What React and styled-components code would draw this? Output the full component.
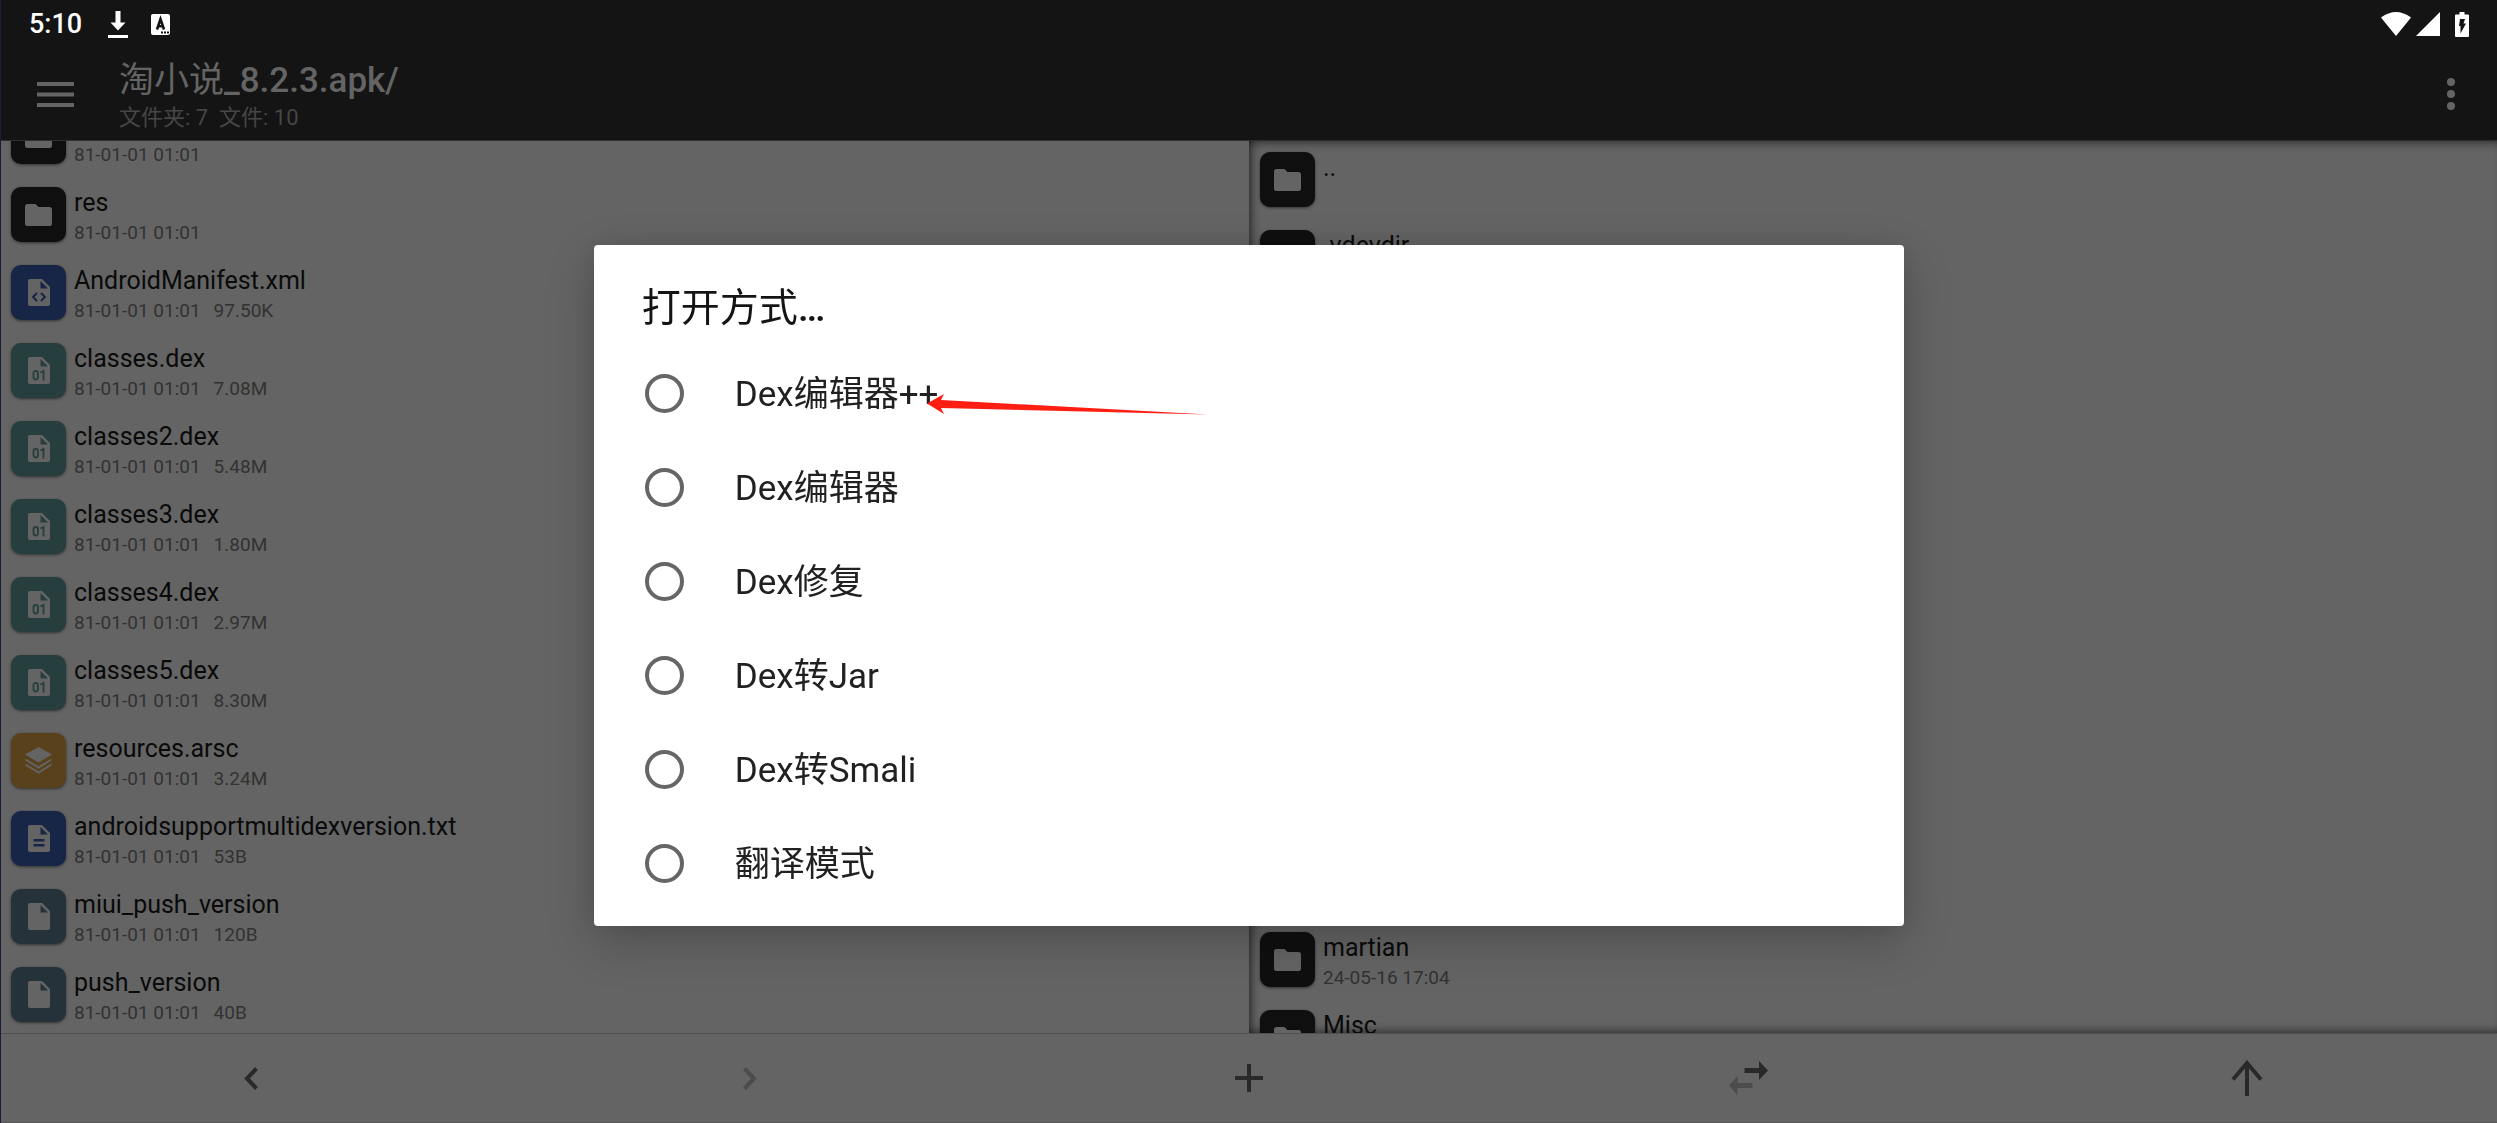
import React from "react";
import styled, { createGlobalStyle } from "styled-components";

const Global = createGlobalStyle`
  * { box-sizing: border-box; }
  html, body, #root { height: 100%; margin: 0; }
  body { background: #646464; overflow: hidden; font-family: Roboto, "Noto Sans CJK SC", sans-serif; }
  button { background: none; border: 0; padding: 0; margin: 0; font: inherit; color: inherit; }
`;

const Screen = styled.div`
  height: 100vh;
  display: flex;
  flex-direction: column;
  border-left: 1px solid #1f1c38;
`;

const StatusBar = styled.div`
  flex: none;
  height: 48px;
  padding: 0 28px;
  display: flex;
  align-items: center;
  justify-content: space-between;
  background: #141414;
  color: #fff;
`;

const StatusGroup = styled.div`
  display: flex;
  align-items: center;
`;

const Clock = styled.span`
  font-size: 27px;
  line-height: 48px;
  font-weight: 500;
  margin-right: 26px;
`;

const Glyph = styled.svg`
  display: block;
  flex: none;
  width: ${(p) => p.$w}px;
  height: ${(p) => p.$h}px;
  margin-left: ${(p) => p.$gap || 0}px;
`;

const AppBar = styled.header`
  flex: none;
  height: 93px;
  padding: 0 40px 0 36px;
  display: flex;
  align-items: center;
  background: #141414;
  border-bottom: 1px solid #303030;
  color: #646464;
`;

const Titles = styled.div`
  flex: 1;
  margin-left: 45px;
  padding-top: 4px;
`;

const AppTitle = styled.h1`
  margin: 0;
  font-size: 35px;
  line-height: 44px;
  font-weight: 500;
`;

const Han = styled.span`
  font-weight: 400;
`;

const AppSubtitle = styled.p`
  margin: 0;
  font-size: 22px;
  line-height: 30px;
  color: #464646;
  white-space: pre;
`;

const Panes = styled.main`
  flex: 1;
  min-height: 0;
  display: grid;
  grid-template-columns: 1fr 1fr;
`;

const Pane = styled.ul`
  list-style: none;
  margin: 0;
  min-width: 0;
  overflow: hidden;
  display: flex;
  flex-direction: column;
  gap: 23px;
  justify-content: ${(p) => (p.$scrolled ? "flex-end" : "flex-start")};
  padding: ${(p) => (p.$scrolled ? "0 10px 11px" : "11px 11px 0")};
  box-shadow: ${(p) =>
    p.$sunken
      ? "inset 10px 0 10px -8px rgba(0,0,0,.6), inset 0 10px 10px -8px rgba(0,0,0,.5), inset 0 -10px 10px -8px rgba(0,0,0,.5)"
      : "none"};
`;

const Entry = styled.li`
  flex: none;
  height: 55px;
  display: flex;
  gap: 8px;
`;

const Badge = styled.span`
  flex: none;
  width: 55px;
  height: 55px;
  border-radius: 10px;
  display: flex;
  align-items: center;
  justify-content: center;
  background: ${(p) => p.$color};
  box-shadow: 0 1px 3px rgba(0, 0, 0, 0.5);
`;

const Name = styled.span`
  display: block;
  font-size: 25px;
  line-height: 32px;
  height: 32px;
  color: #0a0a0a;
`;

const Meta = styled.span`
  display: flex;
  gap: 13px;
  font-size: 19px;
  line-height: 28px;
  color: #323232;
`;

const NavBar = styled.nav`
  flex: none;
  height: 90px;
  display: grid;
  grid-template-columns: repeat(5, 1fr);
  border-top: 1px solid #505050;
  border-bottom: 1px solid #565656;
`;

const NavButton = styled.button`
  display: flex;
  align-items: center;
  justify-content: center;
`;

const Overlay = styled.div`
  position: fixed;
  inset: 48px 0 0 1px;
  display: flex;
  align-items: center;
  justify-content: center;
`;

const Dialog = styled.form`
  width: 52.5%;
  padding: 38px 48px 16px;
  background: #fff;
  border-radius: 4px;
  box-shadow: 0 16px 50px rgba(0, 0, 0, 0.2), 0 0 24px rgba(0, 0, 0, 0.1);
`;

const DialogTitle = styled.h2`
  margin: 0 0 13px;
  font-size: 39px;
  line-height: 50px;
  font-weight: 500;
  color: #141414;
`;

const Option = styled.label`
  height: 94px;
  display: flex;
  align-items: center;
  gap: 51px;
  font-size: 35px;
  line-height: 48px;
  color: #212121;
`;

const Radio = styled.input`
  appearance: none;
  margin: 0 0 0 3px;
  width: 39px;
  height: 39px;
  border: 4px solid #666;
  border-radius: 50%;
`;

const OptionText = styled.span`
  position: relative;
  padding-top: 3px;
`;

const Pointer = styled.svg`
  position: absolute;
  left: 192px;
  top: 26px;
  width: 281px;
  height: 21px;
`;

const GREY = "#646464";
const kinds = {
  folder: { color: "#0f0f0f" },
  xml: { color: "#172647" },
  dex: { color: "#263e3d" },
  arsc: { color: "#59421b" },
  txt: { color: "#172647" },
  file: { color: "#26323a" },
};

function KindIcon({ kind }) {
  const color = kinds[kind].color;
  if (kind === "folder")
    return (
      <Glyph $w={27} $h={22} viewBox="0 0 27 22" aria-hidden="true">
        <path fill={GREY} d="M2.5 0H10.5L13.5 3H24.5A2.5 2.5 0 0 1 27 5.500V19.500A2.500 2.500 0 0 1 24.500 22H2.500A2.500 2.500 0 0 1 0 19.500V2.500A2.500 2.500 0 0 1 2.500 0Z" />
      </Glyph>
    );
  if (kind === "arsc")
    return (
      <Glyph $w={27} $h={27} viewBox="0 0 27 27" aria-hidden="true">
        <path fill={GREY} d="M13.500 0L27 7.500L13.500 15.500L0 7.500Z" />
        <path fill="none" stroke={GREY} strokeWidth="2" d="M.5 12.500L13.500 20.500L26.500 12.500M.5 17.500L13.500 25.500L26.500 17.500" />
      </Glyph>
    );
  return (
    <Glyph $w={22} $h={27} viewBox="0 0 22 27" aria-hidden="true">
      <path fill={GREY} d="M2 0H14L22 8V25A2 2 0 0 1 20 27H2A2 2 0 0 1 0 25V2A2 2 0 0 1 2 0Z" />
      <path fill={color} d="M12.500 2V9.500H20Z" />
      {kind === "xml" && <path fill="none" stroke={color} strokeWidth="2" d="M9 14L5 18L9 22M13 14L17 18L13 22" />}
      {kind === "txt" && <path fill={color} d="M5.500 14H16.500V16.500H5.500ZM5.500 19H16.500V21.500H5.500Z" />}
      {kind === "dex" && (
        <g fill="none" stroke={color} strokeWidth="1.800">
          <rect x="5.500" y="14" width="4.500" height="8.500" rx="2.200" />
          <path d="M12.500 15.500L15.500 14V23.400" />
        </g>
      )}
    </Glyph>
  );
}

const D = "81-01-01 01:01";
const left = [
  { kind: "folder", date: D },
  { kind: "folder", name: "res", date: D },
  { kind: "xml", name: "AndroidManifest.xml", date: D, size: "97.50K" },
  { kind: "dex", name: "classes.dex", date: D, size: "7.08M" },
  { kind: "dex", name: "classes2.dex", date: D, size: "5.48M" },
  { kind: "dex", name: "classes3.dex", date: D, size: "1.80M" },
  { kind: "dex", name: "classes4.dex", date: D, size: "2.97M" },
  { kind: "dex", name: "classes5.dex", date: D, size: "8.30M" },
  { kind: "arsc", name: "resources.arsc", date: D, size: "3.24M" },
  { kind: "txt", name: "androidsupportmultidexversion.txt", date: D, size: "53B" },
  { kind: "file", name: "miui_push_version", date: D, size: "120B" },
  { kind: "file", name: "push_version", date: D, size: "40B" },
];
const right = [
  { kind: "folder", name: ".." },
  { kind: "folder", name: ".vdevdir" },
  ...Array.from({ length: 8 }, () => ({ kind: "folder" })),
  { kind: "folder", name: "martian", date: "24-05-16 17:04" },
  { kind: "folder", name: "Misc" },
];
const options = ["Dex编辑器++", "Dex编辑器", "Dex修复", "Dex转Jar", "Dex转Smali", "翻译模式"];

function FileList({ items, ...rest }) {
  return (
    <Pane {...rest}>
      {items.map(({ kind, name, date, size }, i) => (
        <Entry key={i}>
          <Badge $color={kinds[kind].color}>
            <KindIcon kind={kind} />
          </Badge>
          <div>
            <Name>{name}</Name>
            {date && (
              <Meta>
                <span>{date}</span>
                {size && <span>{size}</span>}
              </Meta>
            )}
          </div>
        </Entry>
      ))}
    </Pane>
  );
}

export default function App() {
  return (
    <>
      <Global />
      <Screen>
        <StatusBar>
          <StatusGroup>
            <Clock>5:10</Clock>
            <Glyph $w={20} $h={27} viewBox="0 0 20 27" fill="#fff" aria-hidden="true">
              <path d="M7.500 0H12.500V11.500H17.500L10 19.500L2.500 11.500H7.500ZM0 24H20V27H0Z" />
            </Glyph>
            <Glyph $w={19} $h={21} $gap={23} viewBox="0 0 19 21" aria-hidden="true">
              <rect width="19" height="21" rx="2" fill="#fff" />
              <path fill="none" stroke="#141414" strokeWidth="2.600" d="M6 15.500L9.500 5L13 15.500M7 12.200H12" />
              <path fill="#141414" d="M10 17.500h2v2h-2zM13 17.500h2v2h-2zM16 17.500h2v2h-2z" />
            </Glyph>
          </StatusGroup>
          <StatusGroup>
            <Glyph $w={30} $h={24} viewBox="0 0 30 24" fill="#fff" aria-hidden="true">
              <path d="M0 5.500Q15 -5.500 30 5.500L15 24Z" />
            </Glyph>
            <Glyph $w={24} $h={24} $gap={5} viewBox="0 0 24 24" fill="#fff" aria-hidden="true">
              <path d="M24 0V24H0Z" />
            </Glyph>
            <Glyph $w={14} $h={25} $gap={15} viewBox="0 0 14 25" aria-hidden="true">
              <path fill="#fff" d="M4.500 0H9.500V2.500H13Q14 2.500 14 3.500V24Q14 25 13 25H1Q0 25 0 24V3.500Q0 2.500 1 2.500H4.500Z" />
              <path fill="#141414" d="M5 7H10L8.500 11.500H11L5.500 21.500V14H4Z" />
            </Glyph>
          </StatusGroup>
        </StatusBar>
        <AppBar>
          <button aria-label="菜单">
            <Glyph $w={37} $h={25} viewBox="0 0 37 25" fill={GREY}>
              <path d="M0 0H37V4H0ZM0 10.500H37V14.500H0ZM0 21H37V25H0Z" />
            </Glyph>
          </button>
          <Titles>
            <AppTitle>
              <Han>淘小说</Han>_8.2.3.apk/
            </AppTitle>
            <AppSubtitle>{"文件夹: 7  文件: 10"}</AppSubtitle>
          </Titles>
          <button aria-label="更多">
            <Glyph $w={12} $h={32} viewBox="0 0 12 32" fill={GREY}>
              <circle cx="6" cy="4" r="4" />
              <circle cx="6" cy="16" r="4" />
              <circle cx="6" cy="28" r="4" />
            </Glyph>
          </button>
        </AppBar>
        <Panes>
          <FileList items={left} $scrolled />
          <FileList items={right} $sunken />
        </Panes>
        <NavBar>
          <NavButton aria-label="后退">
            <Glyph $w={14} $h={23} viewBox="0 0 14 23" fill="none" stroke="#292929" strokeWidth="4">
              <path d="M12.500 1.500L3 11.500L12.500 21.500" />
            </Glyph>
          </NavButton>
          <NavButton aria-label="前进">
            <Glyph $w={14} $h={23} viewBox="0 0 14 23" fill="none" stroke="#4c4c4c" strokeWidth="4">
              <path d="M1.500 1.500L11 11.500L1.500 21.500" />
            </Glyph>
          </NavButton>
          <NavButton aria-label="新建">
            <Glyph $w={28} $h={28} viewBox="0 0 28 28" fill="#292929">
              <path d="M12 0H16V12H28V16H16V28H12V16H0V12H12Z" />
            </Glyph>
          </NavButton>
          <NavButton aria-label="交换">
            <Glyph $w={39} $h={34} viewBox="0 0 39 34">
              <path fill="#292929" d="M15.500 7H30V0L39 9.500L30 19V12H15.500Z" />
              <path fill="#4c4c4c" d="M23.500 22V27H8.500V34L0 24.500L8.500 15V22Z" />
            </Glyph>
          </NavButton>
          <NavButton aria-label="向上">
            <Glyph $w={32} $h={36} viewBox="0 0 32 36" fill="none" stroke="#292929" strokeWidth="4">
              <path d="M16 36V3M2 19.500L16 3L30 19.500" />
            </Glyph>
          </NavButton>
        </NavBar>
      </Screen>
      <Overlay>
        <Dialog role="dialog" aria-labelledby="open-with">
          <DialogTitle id="open-with">
            <Han>打开方式</Han>…
          </DialogTitle>
          {options.map((label, i) => (
            <Option key={label}>
              <Radio type="radio" name="opener" />
              <OptionText>
                {label}
                {i === 0 && (
                  <Pointer viewBox="0 0 281 21" fill="#ff1e12" aria-hidden="true">
                    <path d="M0 9.500L17 0L14 6L281 20.500L14 14L17 20Z" />
                  </Pointer>
                )}
              </OptionText>
            </Option>
          ))}
        </Dialog>
      </Overlay>
    </>
  );
}
